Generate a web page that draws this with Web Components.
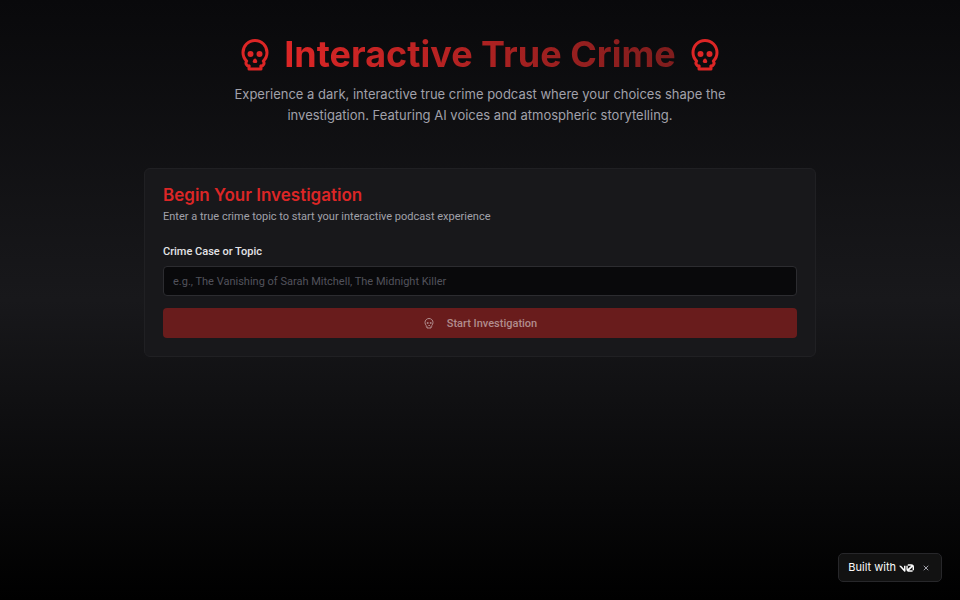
<!DOCTYPE html>
<html lang="en">
<head>
<meta charset="utf-8">
<meta name="viewport" content="width=device-width, initial-scale=1">
<title>Interactive True Crime</title>
<style>
  html {
    height: 100%;
  }

  body {
    margin: 0;
    min-height: 100%;
    background: linear-gradient(to bottom, #09090b, #18181b 50%, #000);
    color: #f4f4f5;
    font-family: Roboto, "Liberation Sans", sans-serif;
    font-size: 11px;
    line-height: 15px;
  }
</style>
</head>
<body>
<crime-app></crime-app>

<script>
/**
 * SkullIcon Web Component
 *
 * Takes its colour from the text and its size from --icon-size.
 */
class SkullIcon extends HTMLElement {
  constructor() {
    super();
    this.attachShadow({ mode: 'open' });
  }

  connectedCallback() {
    this.shadowRoot.innerHTML = `
      <style>
        :host {
          display: block;
          flex: none;
          width: var(--icon-size, 12px);
          height: var(--icon-size, 12px);
        }

        svg {
          display: block;
          width: 100%;
          height: 100%;
        }
      </style>
      <svg viewBox="0 0 24 24" fill="none" stroke="currentColor" stroke-width="2" stroke-linecap="round" stroke-linejoin="round" aria-hidden="true">
        <circle cx="9" cy="12" r="1"/>
        <circle cx="15" cy="12" r="1"/>
        <path d="M8 20v2h8v-2"/>
        <path d="m12.5 17-.5-1-.5 1h1z"/>
        <path d="M16 20a2 2 0 0 0 1.56-3.25 8 8 0 1 0-11.12 0A2 2 0 0 0 8 20"/>
      </svg>
    `;
  }
}

/**
 * PageHero Web Component
 *
 * Title between two skulls, with the "lead" slot below it.
 */
class PageHero extends HTMLElement {
  constructor() {
    super();
    this.attachShadow({ mode: 'open' });
  }

  connectedCallback() {
    this.shadowRoot.innerHTML = `
      <style>
        :host {
          display: block;
          font-family: Inter, "Liberation Sans", sans-serif;
          text-align: center;
        }

        .title {
          display: flex;
          align-items: center;
          justify-content: center;
          gap: 11px;
          color: #dc2626;
          --icon-size: 36px;
        }

        h1 {
          margin: 0;
          font-size: 36px;
          line-height: 36px;
          font-weight: 700;
          background: linear-gradient(to right, #dc2626, #7f1d1d);
          background-clip: text;
          -webkit-background-clip: text;
          color: transparent;
        }

        p {
          max-width: 504px;
          margin: 12px auto 0;
          color: #a1a1aa;
          font-size: 13px;
          line-height: 21px;
        }
      </style>
      <div class="title">
        <skull-icon></skull-icon>
        <h1><slot></slot></h1>
        <skull-icon></skull-icon>
      </div>
      <p><slot name="lead"></slot></p>
    `;
  }
}

/**
 * PanelCard Web Component
 *
 * Bordered panel with "title" and "description" slots.
 */
class PanelCard extends HTMLElement {
  constructor() {
    super();
    this.attachShadow({ mode: 'open' });
  }

  connectedCallback() {
    this.shadowRoot.innerHTML = `
      <style>
        :host {
          display: block;
          box-sizing: border-box;
          padding: 18px;
          border: 1px solid #202023;
          border-radius: 6px;
          background: #18181b;
        }

        header {
          margin-bottom: 20px;
        }

        h2 {
          margin: 0 0 6px;
          color: #dc2626;
          font-family: Inter, "Liberation Sans", sans-serif;
          font-size: 17px;
          line-height: 16px;
          font-weight: 600;
        }

        p {
          margin: 0;
          color: #a1a1aa;
        }
      </style>
      <header>
        <h2><slot name="title"></slot></h2>
        <p><slot name="description"></slot></p>
      </header>
      <slot></slot>
    `;
  }
}

/**
 * TopicForm Web Component
 *
 * @fires start-investigation - Emitted with the topic that was typed
 */
class TopicForm extends HTMLElement {
  constructor() {
    super();
    this.attachShadow({ mode: 'open' });
  }

  connectedCallback() {
    this.render();
    this.attachEvents();
  }

  render() {
    this.shadowRoot.innerHTML = `
      <style>
        :host {
          display: block;
        }

        form {
          display: flex;
          flex-direction: column;
        }

        label {
          margin-bottom: 7px;
          color: #e4e4e7;
          font-weight: 500;
        }

        input,
        button {
          box-sizing: border-box;
          width: 100%;
          height: 30px;
          border-radius: 4px;
          font: inherit;
        }

        input {
          margin: 0 0 12px;
          padding: 0 9px;
          border: 1px solid #2c2c30;
          background: #09090b;
          color: #f4f4f5;
        }

        input::placeholder {
          color: #52525b;
          opacity: 1;
        }

        input:focus {
          outline: none;
          border-color: #dc2626;
        }

        button {
          display: flex;
          align-items: center;
          justify-content: center;
          gap: 12px;
          padding: 0 12px;
          border: 0;
          background: #b91c1c;
          color: #fafafa;
          font-weight: 500;
          cursor: pointer;
        }

        button:disabled {
          background: #691c1c;
          color: #b18c8d;
          cursor: default;
        }
      </style>
      <form>
        <label for="topic">Crime Case or Topic</label>
        <input id="topic" type="text" autocomplete="off" placeholder="e.g., The Vanishing of Sarah Mitchell, The Midnight Killer">
        <button type="submit" disabled><skull-icon></skull-icon>Start Investigation</button>
      </form>
    `;
  }

  attachEvents() {
    const form = this.shadowRoot.querySelector('form');
    const input = this.shadowRoot.querySelector('#topic');
    const button = this.shadowRoot.querySelector('button');

    input.addEventListener('input', () => {
      button.disabled = !input.value.trim();
    });

    form.addEventListener('submit', (e) => {
      e.preventDefault();
      this.dispatchEvent(new CustomEvent('start-investigation', {
        detail: { topic: input.value.trim() },
        bubbles: true,
        composed: true
      }));
    });
  }
}

/**
 * BuiltBadge Web Component
 *
 * Floating link in the corner of the window, with a close button.
 */
class BuiltBadge extends HTMLElement {
  constructor() {
    super();
    this.attachShadow({ mode: 'open' });
  }

  connectedCallback() {
    this.shadowRoot.innerHTML = `
      <style>
        :host {
          position: fixed;
          right: 18px;
          bottom: 18px;
          display: flex;
          align-items: center;
          box-sizing: border-box;
          height: 29px;
          padding: 0 9px;
          border: 1px solid #27272a;
          border-radius: 5px;
          background: #121212;
          font-family: Inter, "Liberation Sans", sans-serif;
        }

        a {
          display: flex;
          align-items: center;
          gap: 3px;
          color: #fafafa;
          text-decoration: none;
        }

        a svg {
          display: block;
          width: 15px;
          height: 8px;
        }

        button {
          display: flex;
          margin: 0 0 0 6px;
          padding: 2px;
          border: 0;
          background: none;
          color: #a1a1aa;
          cursor: pointer;
        }

        button svg {
          display: block;
          width: 8px;
          height: 8px;
        }
      </style>
      <a href="#">Built with
        <svg viewBox="0 0 40 20" fill="currentColor" role="img" aria-label="v0">
          <path d="M23.39 0h9.08A7.53 7.53 0 0 1 40 7.53v8.65h-3.78V7.53c0-.13-.01-.25-.02-.37l-9.05 9.02h9.07V20h-9.08a7.54 7.54 0 0 1-7.54-7.53V3.78h3.79v8.69c0 .17.01.33.04.49L32.6 3.81c-.05 0-.09-.01-.13-.01h-9.08V0Z"/>
          <path d="M13.79 19.14 0 3.78h5.37l8 8.95V3.78h4v13.98c0 2-2.26 2.83-3.58 1.38Z"/>
        </svg>
      </a>
      <button type="button" aria-label="Close">
        <svg viewBox="0 0 8 8" fill="none" stroke="currentColor" stroke-linecap="round"><path d="m2 2 4 4m0-4-4 4"/></svg>
      </button>
    `;

    this.shadowRoot.querySelector('button').addEventListener('click', () => this.remove());
  }
}

class CrimeApp extends HTMLElement {
  constructor() {
    super();
    this.attachShadow({ mode: 'open' });
  }

  connectedCallback() {
    this.shadowRoot.innerHTML = `
      <style>
        :host {
          display: block;
        }

        main {
          box-sizing: border-box;
          max-width: 696px;
          margin: 0 auto;
          padding: 36px 12px;
        }

        panel-card {
          margin-top: 42px;
        }
      </style>
      <main>
        <page-hero>Interactive True Crime<span slot="lead">Experience a dark, interactive true crime podcast where your choices shape the investigation. Featuring AI voices and atmospheric storytelling.</span></page-hero>
        <panel-card>
          <span slot="title">Begin Your Investigation</span>
          <span slot="description">Enter a true crime topic to start your interactive podcast experience</span>
          <topic-form></topic-form>
        </panel-card>
      </main>
      <built-badge></built-badge>
    `;
  }
}

customElements.define('skull-icon', SkullIcon);
customElements.define('page-hero', PageHero);
customElements.define('panel-card', PanelCard);
customElements.define('topic-form', TopicForm);
customElements.define('built-badge', BuiltBadge);
customElements.define('crime-app', CrimeApp);
</script>
</body>
</html>
